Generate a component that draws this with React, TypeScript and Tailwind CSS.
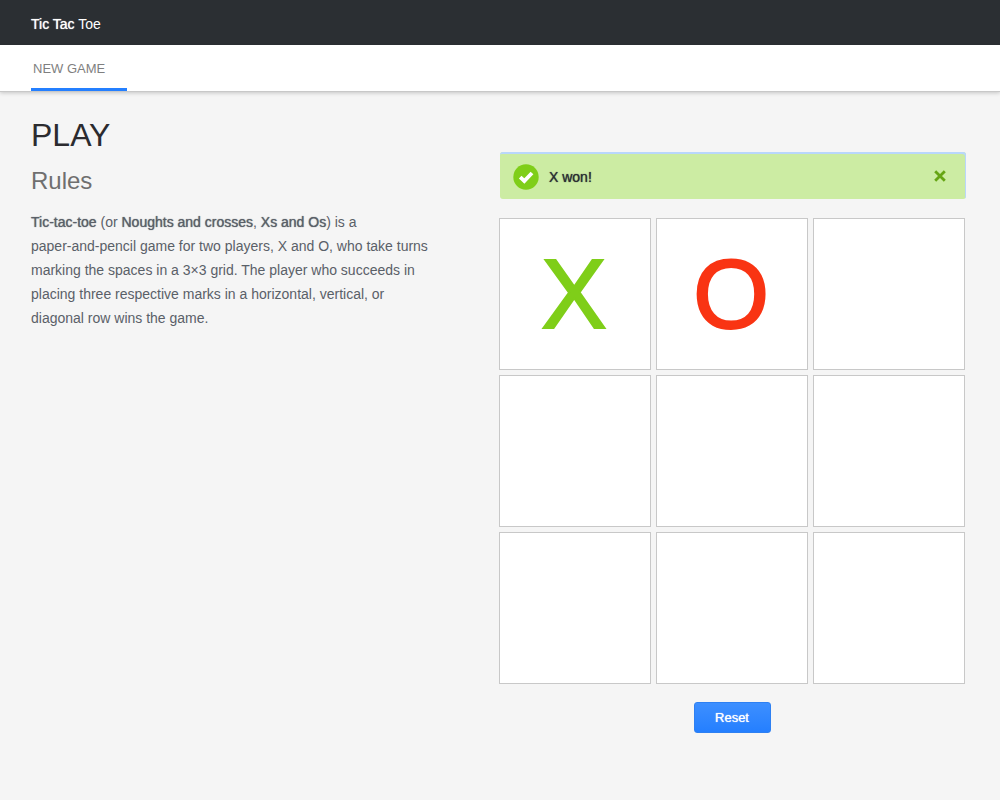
import { useState } from "react";
import type { ReactNode } from "react";

type Mark = "X" | "O" | null;

const START: Mark[] = ["X", "O", null, null, null, null, null, null, null];
const EMPTY: Mark[] = Array(9).fill(null);

function Strong({ children }: { children: ReactNode }) {
  return <strong className="font-normal [text-shadow:0_0_1px_currentColor]">{children}</strong>;
}

function Header() {
  return (
    <header>
      <div className="flex h-[45px] items-center bg-[#2b2f33] px-[31px] pt-0.5 text-sm text-white">
        <p>
          <Strong>Tic Tac</Strong> Toe
        </p>
      </div>
      <nav className="flex h-[46px] bg-white px-[31px] shadow-[0_1px_0_#c8c8c8,0_2px_4px_rgba(0,0,0,0.2)]">
        <a
          href="#new-game"
          className="flex w-24 items-center border-b-3 border-[#247fff] px-0.5 pt-1 text-[13px] text-[#7f7f7f]"
        >
          NEW GAME
        </a>
      </nav>
    </header>
  );
}

function Alert({ onClose }: { onClose: () => void }) {
  return (
    <div
      role="status"
      className="-mr-px ml-px flex h-[47px] items-center rounded-[3px] bg-[#cceca3] pt-0.5 pr-5 pl-[13px] shadow-[inset_-1px_2px_0_#b9d7fb]"
    >
      <svg viewBox="0 0 26 26" className="size-[26px]" aria-hidden="true">
        <circle cx="13" cy="13" r="12.7" fill="#7fce19" />
        <path d="M7.2 13.2 L11.3 17 L19 9" fill="none" stroke="#fff" strokeWidth="3.8" />
      </svg>
      <span className="ml-2.5 flex-1 text-sm text-[#2b2f33]">
        <Strong>X won!</Strong>
      </span>
      <button type="button" aria-label="Close" onClick={onClose} className="cursor-pointer pb-0.5">
        <svg viewBox="0 0 12 12" className="size-3" aria-hidden="true">
          <path d="M1.2 1.2 L10.8 10.8 M10.8 1.2 L1.2 10.8" fill="none" stroke="#66a514" strokeWidth="2.8" />
        </svg>
      </button>
    </div>
  );
}

export default function App() {
  const [cells, setCells] = useState<Mark[]>(START);
  const [showAlert, setShowAlert] = useState(true);

  const play = (index: number) => {
    if (cells[index]) return;
    const count = cells.filter(Boolean).length;
    setCells(cells.map((mark, i) => (i === index ? (count % 2 ? "O" : "X") : mark)));
  };

  const reset = () => {
    setCells(EMPTY);
    setShowAlert(false);
  };

  return (
    <div className="min-h-screen bg-[#f5f5f5] font-['Liberation_Sans',Arial,sans-serif]">
      <Header />
      <main className="flex flex-col gap-8 px-[31px] pt-6 pb-8 md:flex-row md:justify-between md:pr-[35px]">
        <section className="max-w-[408px] flex-1">
          <h1 className="text-[32px] leading-10 text-[#2b2b2f]">PLAY</h1>
          <h2 className="mt-2 text-2xl leading-9 text-[#6f6f6f]">Rules</h2>
          <p className="mt-[11px] text-sm leading-6 text-[#5a6068]">
            <Strong>Tic-tac-toe</Strong> (or <Strong>Noughts and crosses</Strong>, <Strong>Xs and Os</Strong>) is a{" "}
            <br />
            paper-and-pencil game for two players, X and O, who take turns marking the spaces in a 3×3 grid. The
            player who succeeds in placing three respective marks in a horizontal, vertical, or diagonal row wins
            the game.
          </p>
        </section>
        <section className="w-full max-w-[466px] md:pt-[37px]">
          {showAlert && <Alert onClose={() => setShowAlert(false)} />}
          <div className="mt-[19px] grid grid-cols-3 gap-[5px]">
            {cells.map((mark, index) => (
              <button
                key={index}
                type="button"
                aria-label={mark ?? "Empty space"}
                onClick={() => play(index)}
                className="flex aspect-square cursor-pointer items-center justify-center overflow-hidden border border-[#c8c8c8] bg-white pr-0.5 text-[98px] leading-none [-webkit-text-stroke:2px_currentColor]"
              >
                {mark && <span className={mark === "X" ? "text-[#7fce19]" : "text-[#f93413]"}>{mark}</span>}
              </button>
            ))}
          </div>
          <div className="mt-[18px] flex justify-center">
            <button
              type="button"
              onClick={reset}
              className="h-[31px] w-[77px] cursor-pointer rounded-[3px] border border-[#2e80f2] bg-linear-to-b from-[#3d8fff] to-[#247fff] text-[13px] text-white"
            >
              <Strong>Reset</Strong>
            </button>
          </div>
        </section>
      </main>
    </div>
  );
}
